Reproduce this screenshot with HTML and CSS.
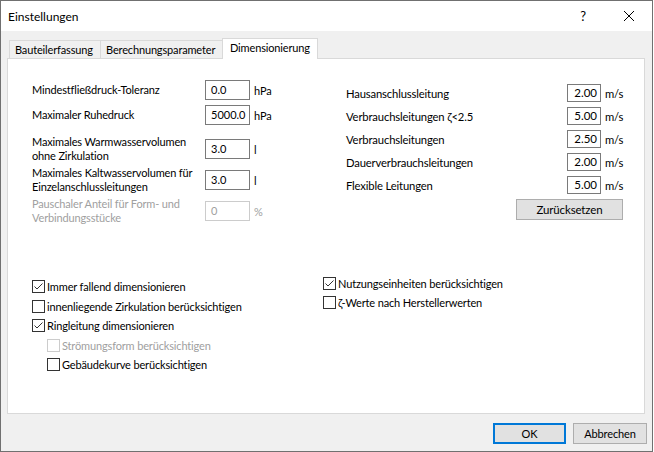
FILE: index.html
```html
<!DOCTYPE html>
<html>
<head>
<meta charset="utf-8">
<link rel="stylesheet" href="styles.css">
</head>
<body>
<div class="window">
  <div class="titlebar">
    <span class="title">Einstellungen</span>
    <div class="caption-buttons">
      <span class="cap-btn help">?</span>
      <span class="cap-btn close"><svg width="12" height="12" viewBox="0 0 12 12"><path d="M1 1 L11 11 M11 1 L1 11" stroke="#000" stroke-width="1" fill="none"/></svg></span>
    </div>
  </div>
  <div class="tabs">
    <div class="tab tab-1">Bauteilerfassung</div>
    <div class="tab tab-2">Berechnungsparameter</div>
    <div class="tab tab-active">Dimensionierung</div>
  </div>
  <div class="panel">
    <div class="top-section">
      <div class="left-form">
        <div class="lrow r1"><span class="llabel">Mindestfließdruck-Toleranz</span><span class="input">0.0</span><span class="unit">hPa</span></div>
        <div class="lrow r2"><span class="llabel">Maximaler Ruhedruck</span><span class="input">5000.0</span><span class="unit">hPa</span></div>
        <div class="lrow tall"><span class="llabel">Maximales Warmwasservolumen<br>ohne Zirkulation</span><span class="input">3.0</span><span class="unit">l</span></div>
        <div class="lrow tall"><span class="llabel">Maximales Kaltwasservolumen für<br>Einzelanschlussleitungen</span><span class="input">3.0</span><span class="unit">l</span></div>
        <div class="lrow tall disabled"><span class="llabel">Pauschaler Anteil für Form- und<br>Verbindungsstücke</span><span class="input">0</span><span class="unit">%</span></div>
      </div>
      <div class="right-form">
        <div class="rrow"><span class="rlabel">Hausanschlussleitung</span><span class="input rinput">2.00</span><span class="unit">m/s</span></div>
        <div class="rrow"><span class="rlabel">Verbrauchsleitungen ζ&lt;2.5</span><span class="input rinput">5.00</span><span class="unit">m/s</span></div>
        <div class="rrow"><span class="rlabel">Verbrauchsleitungen</span><span class="input rinput">2.50</span><span class="unit">m/s</span></div>
        <div class="rrow"><span class="rlabel">Dauerverbrauchsleitungen</span><span class="input rinput">2.00</span><span class="unit">m/s</span></div>
        <div class="rrow"><span class="rlabel">Flexible Leitungen</span><span class="input rinput">5.00</span><span class="unit">m/s</span></div>
        <div class="button reset">Zurücksetzen</div>
      </div>
    </div>
    <div class="check-section">
      <div class="check-left">
        <div class="cb-row"><span class="box checked"><svg width="11" height="11" viewBox="0 0 11 11"><path d="M1.5 5.5 L4 8 L9.5 2.5" stroke="#333" stroke-width="1" fill="none"/></svg></span><span>Immer fallend dimensionieren</span></div>
        <div class="cb-row"><span class="box"></span><span>innenliegende Zirkulation berücksichtigen</span></div>
        <div class="cb-row"><span class="box checked"><svg width="11" height="11" viewBox="0 0 11 11"><path d="M1.5 5.5 L4 8 L9.5 2.5" stroke="#333" stroke-width="1" fill="none"/></svg></span><span>Ringleitung dimensionieren</span></div>
        <div class="cb-row indent disabled"><span class="box"></span><span>Strömungsform berücksichtigen</span></div>
        <div class="cb-row indent"><span class="box"></span><span>Gebäudekurve berücksichtigen</span></div>
      </div>
      <div class="check-right">
        <div class="cb-row rcb"><span class="box checked"><svg width="11" height="11" viewBox="0 0 11 11"><path d="M1.5 5.5 L4 8 L9.5 2.5" stroke="#333" stroke-width="1" fill="none"/></svg></span><span>Nutzungseinheiten berücksichtigen</span></div>
        <div class="cb-row rcb"><span class="box"></span><span>ζ-Werte nach Herstellerwerten</span></div>
      </div>
    </div>
  </div>
  <div class="footer">
    <div class="button ok">OK</div>
    <div class="button cancel">Abbrechen</div>
  </div>
</div>
</body>
</html>
```
FILE: styles.css
```css
html, body {
  margin: 0;
  padding: 0;
  background: #ffffff;
}

.window {
  width: 653px;
  height: 452px;
  box-sizing: border-box;
  border: 1px solid #707070;
  background: #f0f0f0;
  display: flex;
  flex-direction: column;
  font-family: Lato, "Noto Sans", sans-serif;
  font-size: 11px;
  letter-spacing: -0.15px;
  color: #000;
}

.titlebar {
  height: 30px;
  flex: none;
  background: #ffffff;
  display: flex;
  align-items: center;
  padding-left: 7px;
}

.title {
  font-size: 12px;
  letter-spacing: 0;
}

.caption-buttons {
  margin-left: auto;
  display: flex;
  height: 30px;
}

.cap-btn {
  width: 46px;
  height: 30px;
  display: flex;
  align-items: center;
  justify-content: center;
}

.help {
  font-size: 13px;
}

.tabs {
  margin-top: 7px;
  height: 20px;
  flex: none;
  display: flex;
  align-items: flex-end;
  padding-left: 8px;
}

.tab {
  box-sizing: border-box;
  height: 18px;
  border: 1px solid #d9d9d9;
  border-bottom: none;
  background: #f0f0f0;
  padding-left: 5px;
  line-height: 18px;
  white-space: nowrap;
}

.tab-1 {
  width: 92px;
}

.tab-2 {
  width: 123px;
  margin-left: -1px;
}

.tab-active {
  width: 96px;
  height: 21px;
  margin-bottom: -1px;
  margin-left: -1px;
  background: #ffffff;
  position: relative;
  z-index: 1;
  padding-left: 7px;
  line-height: 18px;
}

.panel {
  margin-left: 6px;
  width: 638px;
  height: 356px;
  box-sizing: border-box;
  border: 1px solid #d9d9d9;
  background: #ffffff;
  flex: none;
}

.top-section {
  display: flex;
  padding-top: 21px;
  padding-left: 24px;
}

.left-form {
  width: 314px;
  display: flex;
  flex-direction: column;
  gap: 3px;
}

.lrow {
  display: flex;
  align-items: center;
  height: 20px;
}

.lrow.r1 {
  margin-bottom: 2px;
}

.lrow.r2 {
  margin-bottom: 7px;
}

.lrow.tall {
  height: 28px;
}

.llabel {
  width: 173px;
  line-height: 14px;
  white-space: nowrap;
}

.input {
  box-sizing: border-box;
  width: 45px;
  height: 20px;
  border: 1px solid #7a7a7a;
  padding-left: 5px;
  line-height: 18px;
  background: #fff;
  font-size: 11px;
  letter-spacing: 0;
}

.unit {
  margin-left: 4px;
}

.disabled {
  color: #a0a0a0;
}

.disabled .input {
  border-color: #cccccc;
}

.right-form {
  width: 277px;
  margin-top: 2px;
  display: flex;
  flex-direction: column;
  gap: 1px;
}

.rrow {
  display: flex;
  align-items: center;
  height: 22px;
  font-size: 11.25px;
}

.rlabel {
  flex: 1;
}

.rinput {
  width: 34px;
  height: 18px;
  padding-left: 0;
  padding-right: 3px;
  text-align: right;
  line-height: 16px;
  font-size: 11.5px;
}

.rrow .unit {
  width: 18px;
  margin-left: 4px;
  white-space: nowrap;
}

.button {
  box-sizing: border-box;
  background: #e1e1e1;
  border: 1px solid #adadad;
  display: flex;
  align-items: center;
  justify-content: center;
  height: 21px;
}

.reset {
  margin-top: 2px;
  width: 107px;
  align-self: flex-end;
  font-size: 11.5px;
}

.check-section {
  display: flex;
  margin-top: 49px;
  padding-left: 24px;
}

.check-left {
  width: 291px;
  padding-top: 3px;
}

.cb-row {
  display: flex;
  align-items: center;
  height: 19.5px;
  white-space: nowrap;
}

.cb-row.rcb {
  height: 19px;
}

.cb-row.indent {
  padding-left: 15px;
}

.box {
  box-sizing: border-box;
  width: 13px;
  height: 13px;
  border: 1px solid #333333;
  background: #fff;
  margin-right: 2px;
  display: flex;
  align-items: center;
  justify-content: center;
  flex: none;
}

.disabled .box {
  border-color: #cccccc;
}

.footer {
  display: flex;
  justify-content: flex-end;
  gap: 7px;
  margin-top: 9px;
  padding-right: 5px;
}

.ok {
  width: 73px;
  border: 2px solid #0078d7;
}

.cancel {
  width: 74px;
}
```
